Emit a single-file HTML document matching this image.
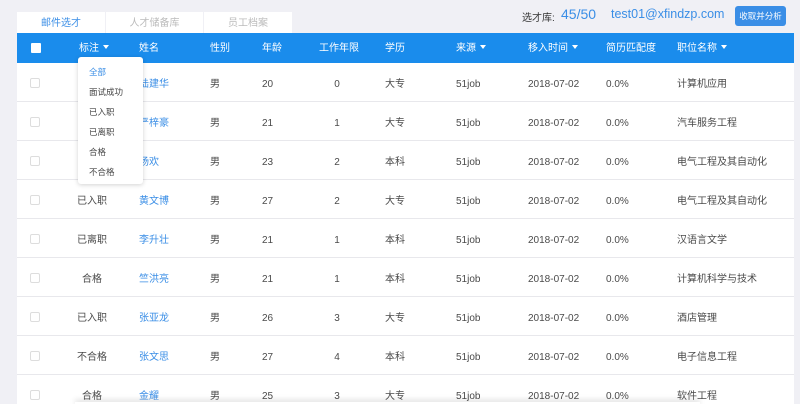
<!DOCTYPE html><html><head><meta charset="utf-8"><style>
*{margin:0;padding:0;box-sizing:border-box}
html,body{width:800px;height:404px;overflow:hidden}
body{background:#f0f0f5;font-family:"Liberation Sans","Noto Sans CJK SC",sans-serif;position:relative;font-size:10px;color:#333}
.a{position:absolute;white-space:nowrap}
.tab{position:absolute;top:12px;height:21px;background:#fff;color:#bbb;font-size:10px;text-align:center;line-height:20px;padding-top:2px}
.hdr{position:absolute;left:17px;top:33px;width:777px;height:30px;background:#1a8cec}
.h{position:absolute;top:42px;color:#fff;font-size:10px;line-height:14px}
.tri{display:inline-block;width:0;height:0;border-left:3.5px solid transparent;border-right:3.5px solid transparent;border-top:4px solid #fff;margin-left:4px;vertical-align:2px}
.body{position:absolute;left:17px;top:63px;width:777px;height:341px;background:#fff}
.row{position:absolute;left:17px;width:777px;height:39px;border-bottom:1px solid #e8e8ec}
.c{position:absolute;font-size:10px;color:#4a4a4a;line-height:14px}
.cb{position:absolute;left:30px;width:10px;height:10px;border:1px solid #ddd;border-radius:2px;background:#fff}
.blue{color:#3a8ee6}
.dd{position:absolute;left:78px;top:57px;width:65px;height:127px;background:#fff;border-radius:3px;box-shadow:0 1px 5px rgba(0,0,0,.18)}
.dd div{position:absolute;left:11px;font-size:8.5px;color:#444}
</style></head><body>
<div class="tab" style="left:17px;width:88px;color:#3a8ee6">邮件选才</div>
<div class="tab" style="left:106px;width:97px">人才储备库</div>
<div class="tab" style="left:204px;width:88px">员工档案</div>
<div class="a" style="left:522px;top:9px;font-size:10px;color:#333">选才库:</div>
<div class="a" style="left:561px;top:6px;font-size:14px;color:#3a8ee6">45/50</div>
<div class="a" style="left:611px;top:7px;font-size:12.5px;color:#3a8ee6">test01@xfindzp.com</div>
<div class="a" style="left:735px;top:6px;width:51px;height:20px;background:#3a8ee6;border-radius:3px;color:#fff;font-size:8.5px;text-align:center;line-height:20px">收取并分析</div>
<div class="hdr"></div>
<div class="a" style="left:31px;top:43px;width:10px;height:10px;background:#fff;border-radius:1px"></div>
<div class="h" style="left:79px">标注<span class="tri"></span></div>
<div class="h" style="left:139px">姓名</div>
<div class="h" style="left:210px">性别</div>
<div class="h" style="left:262px">年龄</div>
<div class="h" style="left:319px">工作年限</div>
<div class="h" style="left:385px">学历</div>
<div class="h" style="left:456px">来源<span class="tri"></span></div>
<div class="h" style="left:528px">移入时间<span class="tri"></span></div>
<div class="h" style="left:606px">简历匹配度</div>
<div class="h" style="left:677px">职位名称<span class="tri"></span></div>
<div class="body"></div>
<div id="rows"></div>
<script>
var d=[["","陆建华","20","0","大专","计算机应用"],["","严梓豪","21","1","大专","汽车服务工程"],["","杨欢","23","2","本科","电气工程及其自动化"],["已入职","黄文博","27","2","大专","电气工程及其自动化"],["已离职","李升壮","21","1","本科","汉语言文学"],["合格","竺洪亮","21","1","本科","计算机科学与技术"],["已入职","张亚龙","26","3","大专","酒店管理"],["不合格","张文思","27","4","本科","电子信息工程"],["合格","金耀","25","3","大专","软件工程"]];
var h="";d.forEach(function(r,i){var t=63+i*39;var y=t+15;
h+='<div class="row" style="top:'+t+'px"></div><div class="cb" style="top:'+y+'px"></div>';
h+='<div class="c" style="left:62px;width:60px;text-align:center;top:'+y+'px">'+r[0]+'</div>';
h+='<div class="c blue" style="left:139px;top:'+y+'px">'+r[1]+'</div>';
h+='<div class="c" style="left:210px;top:'+y+'px">男</div>';
h+='<div class="c" style="left:262px;top:'+y+'px">'+r[2]+'</div>';
h+='<div class="c" style="left:317px;width:40px;text-align:center;top:'+y+'px">'+r[3]+'</div>';
h+='<div class="c" style="left:385px;top:'+y+'px">'+r[4]+'</div>';
h+='<div class="c" style="left:456px;top:'+y+'px">51job</div>';
h+='<div class="c" style="left:528px;top:'+y+'px">2018-07-02</div>';
h+='<div class="c" style="left:606px;top:'+y+'px">0.0%</div>';
h+='<div class="c" style="left:677px;top:'+y+'px">'+r[5]+'</div>';});
document.getElementById("rows").innerHTML=h;
</script>
<div class="dd">
<div style="top:9px;color:#3a8ee6">全部</div>
<div style="top:29px">面试成功</div>
<div style="top:49px">已入职</div>
<div style="top:69px">已离职</div>
<div style="top:89px">合格</div>
<div style="top:109px">不合格</div>
</div>
<div class="a" style="left:75px;top:402px;width:625px;height:4px;box-shadow:0 -2px 6px rgba(0,0,0,.15)"></div>
</body></html>
